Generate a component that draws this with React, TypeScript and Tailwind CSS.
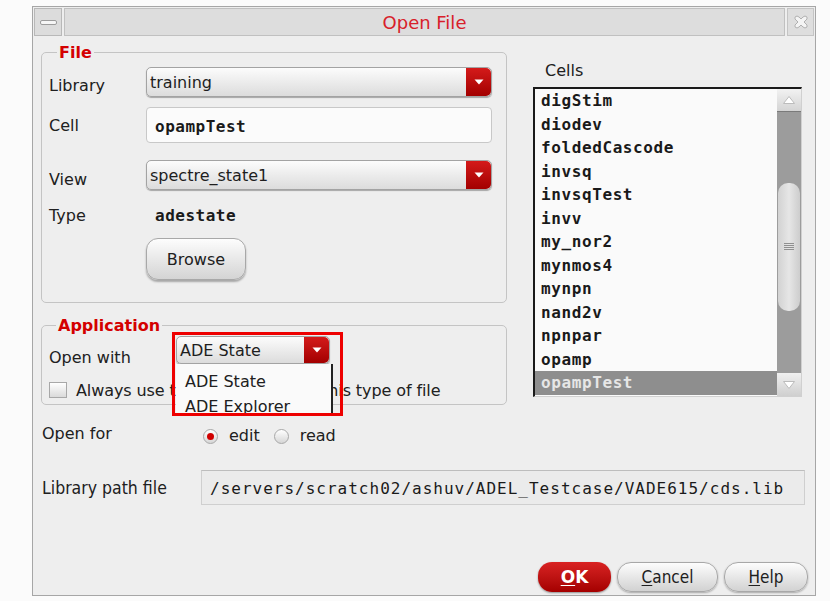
import React from "react";

const cells = [
  "digStim",
  "diodev",
  "foldedCascode",
  "invsq",
  "invsqTest",
  "invv",
  "my_nor2",
  "mynmos4",
  "mynpn",
  "nand2v",
  "npnpar",
  "opamp",
  "opampTest",
];

function DownArrow() {
  return (
    <svg width="10" height="6" viewBox="0 0 10 6">
      <path d="M0.5 0.5 L9.5 0.5 L5 5.5 Z" fill="#ffffff" />
    </svg>
  );
}

function Combo({ value }: { value: string }) {
  return (
    <div className="flex h-full w-full rounded-[5px] border border-[#a3a3a3] bg-linear-to-b from-[#fcfcfc] to-[#dcdcdc] shadow-[0_1px_1px_rgba(0,0,0,0.3)]">
      <div className="flex flex-1 items-center pl-[3px] pt-[2px] text-[16px] text-[#1e1e1e]">{value}</div>
      <div className="flex w-[25px] items-center justify-center rounded-r-[5px] bg-linear-to-b from-[#d41a1a] to-[#a30000]">
        <DownArrow />
      </div>
    </div>
  );
}

function Radio({ checked }: { checked?: boolean }) {
  return (
    <div className="flex h-[15px] w-[15px] items-center justify-center rounded-full border border-[#a8a8a8] bg-linear-to-b from-[#ffffff] to-[#d6d6d6]">
      {checked && <div className="h-[7px] w-[7px] rounded-full bg-[#d00000]" />}
    </div>
  );
}

function Scrollbar() {
  return (
    <div className="flex w-[24px] flex-col bg-[#9c9c9c]">
      <div className="flex h-[23px] items-center justify-center border-b border-[#7a7a7a] bg-linear-to-b from-[#f2f2f2] to-[#d4d4d4]">
        <svg width="14" height="10" viewBox="0 0 14 10">
          <path d="M1.5 8.5 L7 1.5 L12.5 8.5 Z" fill="#ffffff" stroke="#bcbcbc" strokeWidth="1" />
        </svg>
      </div>
      <div className="flex flex-1 flex-col px-[1px] pt-[71px]">
        <div className="flex h-[128px] items-center justify-center rounded-[10px] bg-linear-to-r from-[#d2d2d2] via-[#e6e6e6] to-[#cdcdcd]">
          <svg width="10" height="10" viewBox="0 0 10 10">
            <path d="M0 1.5 H10 M0 3.5 H10 M0 5.5 H10 M0 7.5 H10" stroke="#909090" strokeWidth="1" />
          </svg>
        </div>
      </div>
      <div className="flex h-[23px] items-center justify-center bg-linear-to-b from-[#f0f0f0] to-[#cfcfcf]">
        <svg width="14" height="10" viewBox="0 0 14 10">
          <path d="M1.5 1.5 L12.5 1.5 L7 8.5 Z" fill="#ffffff" stroke="#bcbcbc" strokeWidth="1" />
        </svg>
      </div>
    </div>
  );
}

export default function App() {
  return (
    <div className="h-[601px] w-[830px] overflow-hidden bg-[#fbfbfb] pl-[32px] pt-[6px] font-['DejaVu_Sans',sans-serif] text-[#202020]">
      <div className="flex h-[590px] w-[784px] flex-col border border-[#a6a6a6] bg-[#eeeeee]">
        {/* title bar */}
        <div className="flex h-[30px] gap-[2px] p-[1px]">
          <div className="flex w-[28px] items-center justify-center border border-[#b8b8b8] bg-[#dcdcdc]">
            <div className="h-[5px] w-[17px] rounded-[2px] border border-[#9c9c9c] bg-[#f6f6f6]" />
          </div>
          <div className="flex flex-1 items-center justify-center border border-[#c0c0c0] bg-[#dddddd] pt-[1px] text-[18px] text-[#d8202a]">
            Open File
          </div>
          <div className="flex w-[27px] items-center justify-center border border-[#c4c4c4] bg-[#dedede]">
            <svg width="16" height="16" viewBox="0 0 16 16">
              <path
                d="M2 3 Q4 1 6 3 L8 5 L10 3 Q12 1 14 3 Q15 5 12 7 L11 8 L12 9 Q15 11 14 13 Q12 15 10 13 L8 11 L6 13 Q4 15 2 13 Q1 11 4 9 L5 8 L4 7 Q1 5 2 3 Z"
                fill="#f4f4f4"
                stroke="#b0b0b0"
                strokeWidth="1"
              />
            </svg>
          </div>
        </div>

        {/* main */}
        <div className="flex pl-[8px]">
          <div className="flex w-[466px] flex-col">
            <fieldset className="mt-[6px] rounded-[5px] border border-[#c4c4c4] px-[7px] pb-[22px]">
              <legend className="ml-[8px] px-[2px] text-[16px] leading-[19px] font-bold text-[#d40000]">File</legend>
              <div className="mt-[5px] flex h-[30px]">
                <div className="w-[97px] pt-[7px] text-[16px]">Library</div>
                <div className="w-[346px]">
                  <Combo value="training" />
                </div>
              </div>
              <div className="mt-[10px] flex h-[36px] items-center">
                <div className="w-[97px] pt-[1px] text-[16px]">Cell</div>
                <div className="flex h-full w-[346px] items-center rounded-[4px] border border-[#c8c8c8] bg-[#fbfbfb] pl-[8px] pt-[3px] font-['DejaVu_Sans_Mono',monospace] text-[16px] font-bold tracking-[0.5px] text-[#1a1a1a]">
                  opampTest
                </div>
              </div>
              <div className="mt-[17px] flex h-[30px]">
                <div className="w-[97px] pt-[8px] text-[16px]">View</div>
                <div className="w-[346px]">
                  <Combo value="spectre_state1" />
                </div>
              </div>
              <div className="mt-[13px] flex h-[24px] items-center pt-[2px]">
                <div className="w-[97px] text-[16px]">Type</div>
                <div className="pl-[9px] font-['DejaVu_Sans_Mono',monospace] text-[16px] font-bold tracking-[0.5px] text-[#1a1a1a]">
                  adestate
                </div>
              </div>
              <div className="mt-[11px] flex">
                <div className="w-[97px]" />
                <div className="flex h-[42px] w-[100px] items-center justify-center rounded-[12px] border border-[#a8a8a8] bg-linear-to-b from-[#fdfdfd] to-[#d4d4d4] pt-[2px] text-[16px] shadow-[0_2px_2px_rgba(0,0,0,0.3)]">
                  Browse
                </div>
              </div>
            </fieldset>

            <fieldset className="mt-[13px] rounded-[5px] border border-[#c4c4c4] px-[7px] pb-[6px]">
              <legend className="ml-[7px] px-[2px] text-[16px] leading-[19px] font-bold text-[#d40000]">Application</legend>
              <div className="mt-[1px] flex h-[28px]">
                <div className="w-[127px] pt-[10px] text-[16px]">Open with</div>
                <div className="relative w-[154px]">
                  <Combo value="ADE State" />
                  <div className="absolute left-0 top-[28px] z-10 flex h-[52px] w-[157px] flex-col border-r-2 border-b-2 border-[#222222] bg-[#fafafa] pl-[9px] pt-[5px] text-[16px]">
                    <div className="flex h-[25px] items-center">ADE State</div>
                    <div className="flex h-[20px] items-center pt-[5px]">ADE Explorer</div>
                  </div>
                  <div className="absolute left-[-4px] top-[-4px] z-20 h-[84px] w-[171px] border-[3px] border-[#ee0000]" />
                </div>
              </div>
              <div className="mt-[18px] flex h-[16px] items-center">
                <div className="h-[16px] w-[18px] border border-[#a8a8a8] bg-linear-to-b from-[#ffffff] to-[#dadada]" />
                <div className="ml-[9px] pt-[2px] text-[16px] tracking-[-0.1px] whitespace-nowrap">
                  Always use this application for this type of file
                </div>
              </div>
            </fieldset>
          </div>

          <div className="ml-[26px] flex w-[269px] flex-col">
            <div className="mt-[24px] pl-[12px] text-[16px] leading-[19px]">Cells</div>
            <div className="mt-[7px] flex h-[310px] border-t-2 border-l-2 border-[#1a1a1a] border-r border-b border-r-[#d0d0d0] border-b-[#d0d0d0] bg-[#fafafa]">
              <div className="flex flex-1 flex-col">
                {cells.map((c) => (
                  <div
                    key={c}
                    className={`flex h-[23.5px] items-center pl-[6px] pt-[1px] font-['DejaVu_Sans_Mono',monospace] text-[16px] font-bold tracking-[0.6px] ${
                      c === "opampTest" ? "bg-[#8e8e8e] text-[#e6e6e6]" : "text-[#1a1a1a]"
                    }`}
                  >
                    {c}
                  </div>
                ))}
              </div>
              <Scrollbar />
            </div>
          </div>
        </div>

        {/* open for */}
        <div className="mt-[19px] flex h-[24px] items-center pl-[9px]">
          <div className="w-[161px] pb-[4px] text-[16px]">Open for</div>
          <Radio checked />
          <div className="ml-[11px] text-[16px]">edit</div>
          <div className="ml-[14px]">
            <Radio />
          </div>
          <div className="ml-[11px] text-[16px]">read</div>
        </div>

        {/* library path */}
        <div className="mt-[22px] flex h-[35px] items-center pl-[9px]">
          <div className="w-[159px] pt-[2px] font-['DejaVu_Sans_Condensed','DejaVu_Sans',sans-serif] text-[17.5px] [font-stretch:condensed]">
            Library path file
          </div>
          <div className="flex h-full w-[604px] items-center border border-[#cfcfcf] border-t-[#bdbdbd] bg-[#ebebeb] pl-[8px] pt-[3px] font-['DejaVu_Sans_Mono',monospace] text-[16px] tracking-[1px] text-[#1a1a1a]">
            /servers/scratch02/ashuv/ADEL_Testcase/VADE615/cds.lib
          </div>
        </div>

        {/* buttons */}
        <div className="mt-[57px] flex h-[30px] justify-end gap-[6px] pr-[7px]">
          <div className="flex w-[73px] items-center justify-center rounded-[14px] bg-linear-to-b from-[#d92222] to-[#a40000] pt-[2px] text-[17px] font-bold text-white shadow-[0_1px_2px_rgba(0,0,0,0.4)]">
            <span className="underline underline-offset-2">O</span>K
          </div>
          <div className="flex w-[101px] items-center justify-center rounded-[14px] border border-[#a8a8a8] bg-linear-to-b from-[#fdfdfd] to-[#d2d2d2] pt-[2px] font-['DejaVu_Sans_Condensed','DejaVu_Sans',sans-serif] text-[17px] [font-stretch:condensed] shadow-[0_1px_2px_rgba(0,0,0,0.3)]">
            <span className="underline underline-offset-2">C</span>ancel
          </div>
          <div className="flex w-[84px] items-center justify-center rounded-[14px] border border-[#a8a8a8] bg-linear-to-b from-[#fdfdfd] to-[#d2d2d2] pt-[2px] font-['DejaVu_Sans_Condensed','DejaVu_Sans',sans-serif] text-[17px] [font-stretch:condensed] shadow-[0_1px_2px_rgba(0,0,0,0.3)]">
            <span className="underline underline-offset-2">H</span>elp
          </div>
        </div>
      </div>
    </div>
  );
}
